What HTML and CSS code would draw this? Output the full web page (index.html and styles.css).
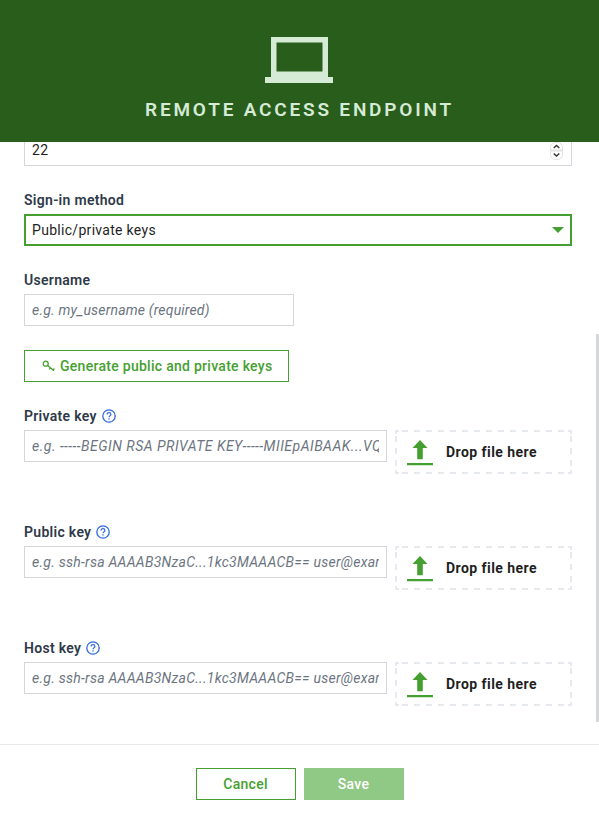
FILE: index.html
```html
<!DOCTYPE html>
<html lang="en">
  <head>
    <meta charset="utf-8">
    <title>Remote Access Endpoint</title>
    <link rel="stylesheet" href="styles.css">
  </head>
  <body>
    <!-- Shared icons -->
    <svg class="sprite" xmlns="http://www.w3.org/2000/svg">
      <symbol id="help" viewBox="0 0 14 14">
        <circle cx="7" cy="7" r="6.2" fill="none" stroke="currentColor" stroke-width="1.3"/>
        <path d="M5.1 5.6C5.1 4.4 5.9 3.7 7 3.7s1.9.7 1.9 1.7c0 1.3-1.8 1.4-1.8 2.9" fill="none" stroke="currentColor" stroke-width="1.2"/>
        <path d="M6.4 9.2h1.3v1.3H6.4z" fill="currentColor"/>
      </symbol>
      <symbol id="upload" viewBox="0 0 26 26">
        <path d="M13 0l7.5 8h-4.7v11.3h-5.6V8H5.500zM0 23h26v2.300H0z" fill="currentColor"/>
      </symbol>
      <symbol id="dashes" viewBox="0 0 177 44">
        <path d="M7 1H170M7 43H170M1 6V40M176 6V40" fill="none" stroke="currentColor" stroke-width="2" stroke-dasharray="6 6"/>
        <path d="M1 4V1H4M173 1H176V4M1 40V43H4M173 43H176V40" fill="none" stroke="currentColor" stroke-width="2"/>
      </symbol>
    </svg>

    <div class="modal">
      <div class="header">
        <svg class="laptop" viewBox="0 0 68 46">
          <path d="M6 0h57v40h5v6H0v-6h6zM11.500 5.500V34.500H57.500V5.500z" fill="currentColor" fill-rule="evenodd"/>
        </svg>
        <h1>Remote Access Endpoint</h1>
      </div>

      <div class="content">
        <div class="port">
          <input type="text" class="input" value="22">
          <svg class="stepper" viewBox="0 0 14 18">
            <rect x=".5" y=".5" width="12" height="17" rx="5" fill="#fff" stroke="#e2e2e2"/>
            <path d="M1 8.500h11" stroke="#e2e2e2" stroke-width="2"/>
            <path d="M3.700 6l2.800-2.500L9.300 6M3.700 11.500l2.800 2.500 2.800-2.500" fill="none" stroke="#333" stroke-width="1.400"/>
          </svg>
        </div>

        <div class="field">
          <label>Sign-in method</label>
          <div class="select"><span>Public/private keys</span><i class="caret"></i></div>
        </div>

        <div class="field">
          <label>Username</label>
          <input type="text" class="input short" placeholder="e.g. my_username (required)">
        </div>

        <button class="button generate">
          <svg class="key" viewBox="0 0 14 12">
            <circle cx="3.700" cy="3.700" r="2.500"/>
            <path d="M5.600 5.400L12 10.800M8.500 8l-1.200 1.400M11 10l1.300-1.500"/>
          </svg>
          <span>Generate public and private keys</span>
        </button>

        <!-- Key fields with a drop target -->
        <div class="field key-field">
          <label>Private key</label><svg class="help"><use href="#help"/></svg>
          <div class="row">
            <input type="text" class="input rsa" placeholder="e.g. -----BEGIN RSA PRIVATE KEY-----MIIEpAIBAAK...VQIDAQAB">
            <div class="drop">
              <svg class="dashes"><use href="#dashes"/></svg>
              <svg class="upload"><use href="#upload"/></svg>
              <span>Drop file here</span>
            </div>
          </div>
        </div>

        <div class="field key-field">
          <label>Public key</label><svg class="help"><use href="#help"/></svg>
          <div class="row">
            <input type="text" class="input ssh" placeholder="e.g. ssh-rsa AAAAB3NzaC...1kc3MAAACB== user@example.com">
            <div class="drop">
              <svg class="dashes"><use href="#dashes"/></svg>
              <svg class="upload"><use href="#upload"/></svg>
              <span>Drop file here</span>
            </div>
          </div>
        </div>

        <div class="field key-field">
          <label>Host key</label><svg class="help"><use href="#help"/></svg>
          <div class="row">
            <input type="text" class="input ssh" placeholder="e.g. ssh-rsa AAAAB3NzaC...1kc3MAAACB== user@example.com">
            <div class="drop">
              <svg class="dashes"><use href="#dashes"/></svg>
              <svg class="upload"><use href="#upload"/></svg>
              <span>Drop file here</span>
            </div>
          </div>
        </div>
        <div class="scrollbar"></div>
      </div>

      <div class="footer">
        <button class="button cancel">Cancel</button>
        <button class="button save">Save</button>
      </div>
    </div>
  </body>
</html>
```
FILE: styles.css
```css
* {
  box-sizing: border-box;
}

body {
  margin: 0;
  background: #fff;
  font-family: Roboto, "Liberation Sans", sans-serif;
  font-size: 14px;
  color: #1f1f1f;
}

.sprite {
  display: none;
}

.modal {
  display: flex;
  flex-direction: column;
  width: 599px;
  height: 823px;
  overflow: hidden;
}

/* Header */
.header {
  display: flex;
  flex-direction: column;
  align-items: center;
  height: 142px;
  padding-top: 37px;
  background: #285d1b;
  color: #d6ebd5;
}

.laptop {
  width: 68px;
  height: 46px;
  margin-right: 1px;
}

h1 {
  margin: 15px 0 0;
  font-size: 19px;
  line-height: 24px;
  font-weight: 600;
  letter-spacing: 2.8px;
  text-transform: uppercase;
  white-space: nowrap;
}

/* Form */
.content {
  position: relative;
  height: 602px;
  padding: 0 27px 0 24px;
  overflow: hidden;
}

.input {
  display: block;
  width: 100%;
  height: 32px;
  padding: 0 7px;
  border: 1px solid #d3d6db;
  border-radius: 0;
  background: #fff;
  font-family: inherit;
  font-size: 14px;
  letter-spacing: 0.3px;
  color: #1f1f1f;
}

.input::placeholder {
  color: #6c757f;
  font-style: italic;
  opacity: 1;
}

.port {
  position: relative;
  height: 32px;
  margin: -8px 0 24px;
}

.stepper {
  position: absolute;
  top: 8px;
  right: 8px;
  width: 14px;
  height: 18px;
}

.field {
  margin-bottom: 24px;
}

label {
  display: inline-block;
  height: 24px;
  line-height: 20px;
  font-weight: 600;
  letter-spacing: 0.3px;
  color: #2f3a49;
  vertical-align: top;
}

.select {
  display: flex;
  align-items: center;
  justify-content: space-between;
  height: 32px;
  padding: 0 6px;
  border: 2px solid #469f31;
  letter-spacing: 0.3px;
}

.caret {
  border: 6px solid transparent;
  border-top-color: #469f31;
  border-bottom: 0;
}

.short {
  width: 270px;
  letter-spacing: 0.19px;
}

.button {
  height: 32px;
  padding: 0;
  border: 1px solid #469f31;
  background: #fff;
  color: #469f31;
  font-family: inherit;
  font-size: 14px;
  font-weight: 500;
  letter-spacing: 0.28px;
}

.generate {
  display: flex;
  align-items: center;
  width: 265px;
  margin-bottom: 24px;
  padding-left: 17px;
  white-space: nowrap;
}

.key {
  width: 14px;
  height: 12px;
  margin-right: 4px;
  fill: none;
  stroke: currentColor;
  stroke-width: 1.3;
}

.key-field {
  height: 92px;
}

.help {
  width: 14px;
  height: 14px;
  margin: 3px 0 0 5px;
  color: #2d6bdc;
  vertical-align: top;
}

.row {
  display: flex;
  align-items: flex-start;
  gap: 8px;
}

.row .input {
  width: 363px;
}

.rsa {
  letter-spacing: 0.49px;
}

.ssh {
  letter-spacing: 0.26px;
}

.drop {
  position: relative;
  display: flex;
  align-items: center;
  width: 177px;
  height: 44px;
  padding-left: 12px;
  font-weight: 700;
  letter-spacing: 0.45px;
}

.dashes {
  position: absolute;
  top: 0;
  left: 0;
  width: 177px;
  height: 44px;
  color: #e6e9ed;
}

.upload {
  width: 26px;
  height: 26px;
  margin: 1px 13px 0 0;
  color: #469f31;
}

.scrollbar {
  position: absolute;
  top: 192px;
  right: 0;
  width: 3px;
  height: 388px;
  background: #d6d7d9;
}

/* Footer */
.footer {
  display: flex;
  justify-content: center;
  gap: 8px;
  height: 79px;
  padding-top: 23px;
  border-top: 1px solid #e8e9eb;
}

.footer .button {
  width: 100px;
}

.footer .save {
  border-color: #90c885;
  background: #90c885;
  color: #fff;
}
```
